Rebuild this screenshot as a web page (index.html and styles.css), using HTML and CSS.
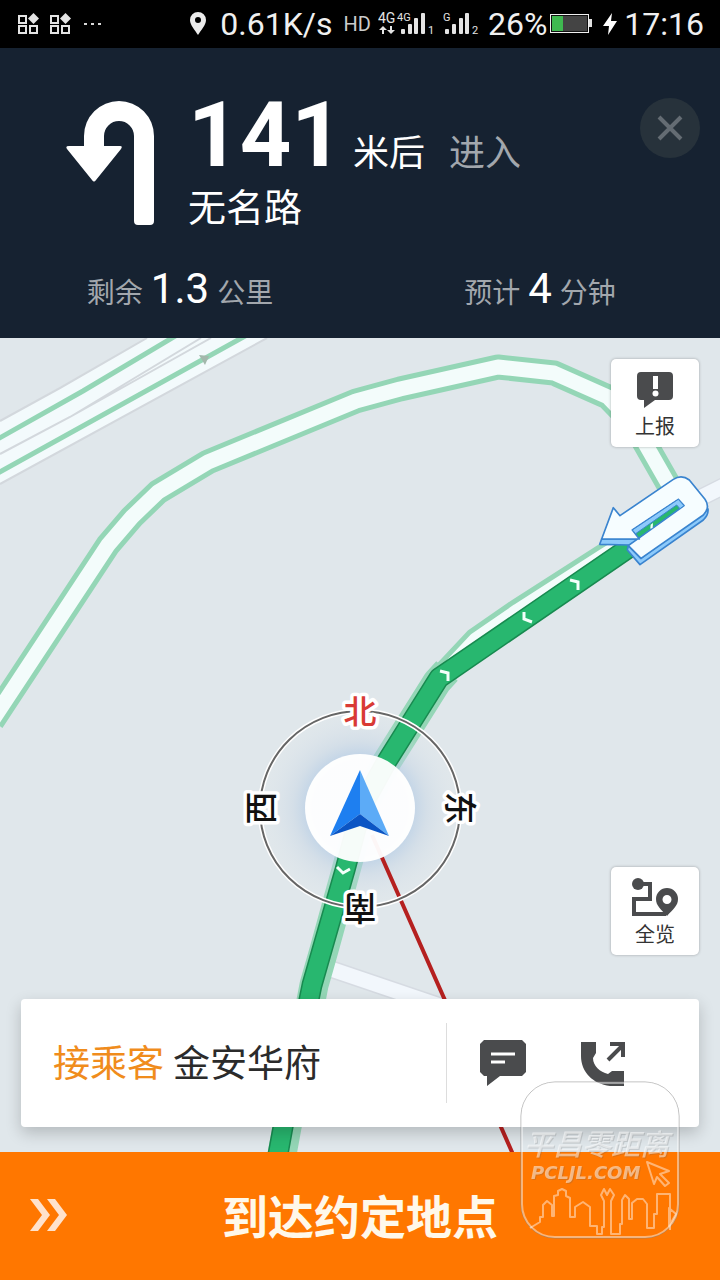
FILE: index.html
```html
<!DOCTYPE html>
<html lang="zh-CN">
<head>
    <meta charset="UTF-8">
    <meta name="viewport" content="width=device-width, initial-scale=1.0">
    <title>导航</title>
    <link rel="stylesheet" href="styles.css">
</head>
<body>
    <div class="status-bar">
        <div class="status-left">
            <svg class="app-icon" width="21" height="22" viewBox="0 0 21 22" aria-hidden="true">
                <path d="M1 3h7v7H1zM1 13h7v7H1zM12 13h7v7h-7z" fill="none" stroke="#e4e4e4" stroke-width="2"/>
                <path d="M15.500 0l5.500 5.500-5.500 5.500-5.500-5.500z" fill="#e4e4e4"/>
            </svg>
            <svg class="app-icon" width="21" height="22" viewBox="0 0 21 22" aria-hidden="true">
                <path d="M1 3h7v7H1zM1 13h7v7H1zM12 13h7v7h-7z" fill="none" stroke="#e4e4e4" stroke-width="2"/>
                <path d="M15.500 0l5.500 5.500-5.500 5.500-5.500-5.500z" fill="#e4e4e4"/>
            </svg>
            <svg width="20" height="4" viewBox="0 0 20 4" fill="#d8d8d8" aria-hidden="true">
                <rect x="2" y="1" width="3" height="2"/><rect x="9" y="1" width="3" height="2"/><rect x="16" y="1" width="3" height="2"/>
            </svg>
        </div>
        <div class="status-right">
            <svg class="pin-icon" width="16" height="24" viewBox="0 0 16 24" aria-hidden="true">
                <path d="M8 0a8 8 0 0 0-8 8c0 5 5 10 8 15 3-5 8-10 8-15a8 8 0 0 0-8-8zm0 5a3 3 0 1 1 0 6 3 3 0 0 1 0-6z" fill="#ececec"/>
            </svg>
            <span class="status-text">0.61K/s</span>
            <span class="status-hd">HD</span>
            <svg width="58" height="26" viewBox="0 0 58 26" fill="#e4e4e4" aria-hidden="true">
                <text class="signal-net" x="0" y="12">4G</text>
                <text class="signal-net small" x="19" y="10">4G</text>
                <path d="M5 15l4 4H6v4H4v-4H1zM13 23l-4-4h3v-4h2v4h3z"/>
                <rect x="23" y="18" width="4" height="5" rx="1"/><rect x="30" y="13" width="4" height="10" rx="1"/>
                <rect x="36" y="7" width="4" height="16" rx="1"/><rect x="43" y="2" width="4" height="21" rx="1"/>
                <text class="signal-net small" x="50" y="23">1</text>
            </svg>
            <svg width="38" height="26" viewBox="0 0 38 26" fill="#e4e4e4" aria-hidden="true">
                <text class="signal-net small" x="0" y="10">G</text>
                <rect x="2" y="18" width="4" height="5" rx="1"/><rect x="9" y="13" width="4" height="10" rx="1"/>
                <rect x="16" y="7" width="4" height="16" rx="1"/><rect x="22" y="2" width="4" height="21" rx="1"/>
                <text class="signal-net small" x="29" y="23">2</text>
            </svg>
            <span class="status-text battery-text">26%</span>
            <svg class="battery-icon" width="42" height="20" viewBox="0 0 42 20" aria-hidden="true">
                <rect x="0.500" y="0.500" width="38" height="18" fill="#111" stroke="#f0f0f0"/>
                <rect x="2" y="2" width="35" height="15" fill="#444"/>
                <rect x="2" y="2" width="11" height="15" fill="#3fb950"/>
                <rect x="39" y="5" width="3" height="8" fill="#e0e0e0"/>
            </svg>
            <svg width="14" height="22" viewBox="0 0 14 22" aria-hidden="true">
                <path d="M9 0L0 13h6l-1 9 9-14H8z" fill="#fff"/>
            </svg>
            <span class="status-text">17:16</span>
        </div>
    </div>

    <header class="guide">
        <div class="guide-main">
            <svg class="turn-icon" width="90" height="126" viewBox="0 0 90 126" aria-hidden="true">
                <path d="M18 41V36a35 35 0 0 1 70 0v85q0 4-4 4H72q-4 0-4-4V36a15 15 0 0 0-30 0v10h16q3 0 1 3L30 80q-2 3-4 0L1 49q-2-3 2-3h15z" fill="#fff"/>
            </svg>
            <div class="guide-text">
                <div class="guide-distance">
                    <strong>141</strong>
                    <span class="unit">米后</span>
                    <span class="action">进入</span>
                </div>
                <div class="guide-road">无名路</div>
            </div>
            <button class="close-btn" type="button" aria-label="关闭">
                <svg width="26" height="26" viewBox="0 0 26 26" aria-hidden="true">
                    <path d="M2 2l22 22M24 2L2 24" stroke="#646c73" stroke-width="4"/>
                </svg>
            </button>
        </div>
        <div class="guide-stats">
            <div class="stat"><span>剩余</span><b>1.3</b><span>公里</span></div>
            <div class="stat"><span>预计</span><b>4</b><span>分钟</span></div>
        </div>
    </header>

    <main class="map">
        <svg class="map-canvas" viewBox="0 338 720 814" preserveAspectRatio="xMidYMid slice" aria-hidden="true">
            <defs>
                <radialGradient id="glow">
                    <stop offset="0.5" stop-color="#a6c4e4" stop-opacity="0.65"/>
                    <stop offset="0.7" stop-color="#c3d3e4" stop-opacity="0.4"/>
                    <stop offset="1" stop-color="#d8e1ea" stop-opacity="0"/>
                </radialGradient>
            </defs>

            <!-- highway -->
            <path d="M0 421L147 338H267L0 484z" fill="#f3fafc"/>
            <g fill="none" stroke="#d3d8dd" stroke-width="2">
                <path d="M0 421L60 388L147 338M0 484L267 338M0 454L70 417L201 338M70 417L211 338"/>
            </g>
            <path d="M-4 440L83 391L177 335M-4 474L247 335" fill="none" stroke="#94d6b6" stroke-width="5"/>
            <path d="M199 355l10 1-4 9z" fill="#a3b8ac"/>

            <!-- minor roads -->
            <g fill="none" stroke-linejoin="round">
                <path d="M690 503L726 485M322 966L440 1006" stroke="#d6dbe2" stroke-width="18"/>
                <path d="M690 503L726 485M322 966L440 1006" stroke="#f2f7fc" stroke-width="15"/>
                <path d="M-8 721L108 545L132 517L158 492L208 462L356 401L400 389L498 367L554 373L608 397L634 424L682 508L604 556L518 611L476 640L446 672" stroke="#94d6b6" stroke-width="25"/>
                <path d="M447 671L437 682L386 763L364 805L346 870L324 950L314 985L287 1127L281 1160" stroke="#94d6b6" stroke-width="29"/>
                <path d="M-8 721L108 545L132 517L158 492L208 462L356 401L400 389L498 367L554 373L608 397L634 424L682 508L604 556L518 611L476 640L446 672" stroke="#f3fcfb" stroke-width="15"/>
            </g>

            <circle cx="360" cy="808" r="96" fill="url(#glow)"/>

            <!-- route -->
            <g fill="none" stroke-linejoin="round">
                <path d="M684 510L439 678L387 761L362 806L345 870L322 950L312 985L283 1127L277 1160" stroke="#188a50" stroke-width="21"/>
                <path d="M684 510L439 678L387 761L362 806L345 870L322 950L312 985L283 1127L277 1160" stroke="#28b76f" stroke-width="18"/>
            </g>
            <g fill="none" stroke="#f3fffa" stroke-width="3">
                <path d="M570 580l8 2v8M524 612v7l8 3M440 671l8 2v8M337 867l6 6 7-4"/>
            </g>
            <path d="M372 835L512 1152L518 1166" fill="none" stroke="#b5201f" stroke-width="4"/>

            <!-- turn marker -->
            <g transform="translate(590 460) scale(0.3333)" stroke="#3a84cf" stroke-width="5" stroke-linejoin="round">
                <path d="M35 237H148L118 255L29 253zM115 257L153 295L354 147Q356 164 340 180L150 314L112 270z" fill="#8ccafb"/>
                <path d="M35 237L70 143L90 167L250 58Q275 42 298 60L345 118Q362 142 340 165L153 295L115 257L282 137L265 118L127 210L148 237z" fill="#f6fdff"/>
                <path d="M127 210L265 118L282 137L270 146L260 135L137 221z" fill="#8ccafb" stroke-width="3"/>
                <path d="M182 194l7-5-1 15-7 2z" fill="#f3fffa" stroke="none"/>
            </g>

            <!-- compass -->
            <ellipse cx="360" cy="809" rx="100" ry="98" fill="none" stroke="#fff" stroke-width="5"/>
            <ellipse cx="360" cy="809" rx="100" ry="98" fill="none" stroke="#666" stroke-width="2"/>
            <ellipse cx="360" cy="808" rx="55" ry="54" fill="#fff" fill-opacity="0.96"/>
            <path d="M360 770L330 836L360 814z" fill="#1e7ff0"/>
            <path d="M360 770L389 836L360 814z" fill="#5cabf7"/>
            <path d="M330 836L360 814L389 836L360 826z" fill="#0b55c4"/>
            <g class="compass-text">
                <text class="north" x="360" y="724">北</text>
                <text x="460" y="820" transform="rotate(90 460 808)">东</text>
                <text x="360" y="920" transform="rotate(180 360 908)">南</text>
                <text x="261" y="820" transform="rotate(-90 261 808)">西</text>
            </g>
        </svg>

        <button class="map-btn" type="button">
            <svg width="36" height="36" viewBox="0 0 36 36" aria-hidden="true">
                <path d="M4 0h28q4 0 4 4v20q0 4-4 4H18L7 36v-8H4q-4 0-4-4V4q0-4 4-4z" fill="#4a4b4d"/>
                <path d="M16 4h5v13h-5z" fill="#fff"/><circle cx="18.500" cy="21.500" r="3" fill="#fff"/>
            </svg>
            <span>上报</span>
        </button>
        <button class="map-btn overview" type="button">
            <svg width="46" height="38" viewBox="0 0 46 38" aria-hidden="true">
                <circle cx="6" cy="6" r="6" fill="#4a4b4d"/>
                <path d="M6 6h12v15H2v15h32" fill="none" stroke="#4a4b4d" stroke-width="4"/>
                <path d="M35 10a11 11 0 0 0-11 11c0 7 5 10 11 17 6-7 11-10 11-17a11 11 0 0 0-11-11zm0 7a4 4 0 1 1 0 9 4 4 0 0 1 0-9z" fill="#4a4b4d"/>
            </svg>
            <span>全览</span>
        </button>

        <section class="trip-card">
            <div class="trip-info"><span class="trip-tag">接乘客</span><span>金安华府</span></div>
            <div class="trip-actions">
                <button type="button" aria-label="发消息">
                    <svg width="46" height="46" viewBox="0 0 46 46" aria-hidden="true">
                        <path d="M4 0h38l4 4v28l-4 4H20L7 46V36H4l-4-4V4z" fill="#4a4b4d"/>
                        <path d="M11 14h24M11 22h14" stroke="#fff" stroke-width="3"/>
                    </svg>
                </button>
                <button type="button" aria-label="打电话">
                    <svg width="46" height="46" viewBox="0 0 46 46" aria-hidden="true">
                        <path d="M1 2h15v11l-3 5c0 8 7 14 15 16l4-3h12v15H30C13 44 1 32 1 16z" fill="#4a4b4d"/>
                        <path d="M28 20L43 5M30 4h13v13" fill="none" stroke="#4a4b4d" stroke-width="4"/>
                    </svg>
                </button>
            </div>
        </section>
    </main>

    <button class="arrive-btn" type="button">
        <svg class="arrive-arrow" width="38" height="32" viewBox="0 0 38 32" aria-hidden="true">
            <path d="M0 0h8l12 16L8 32H0l12-16zM17 0h8l12 16-12 16h-8l12-16z" fill="#ffe2cc"/>
        </svg>
        到达约定地点
    </button>

    <div class="watermark">
        <svg width="160" height="160" viewBox="0 0 160 160" aria-hidden="true">
            <rect x="1" y="2" width="158" height="156" rx="34" fill="none" stroke="#808080" stroke-opacity="0.6"/>
            <g fill="none" stroke="#fff" stroke-opacity="0.45" stroke-width="2" stroke-linejoin="round">
                <rect x="2" y="3" width="156" height="154" rx="33"/>
                <path d="M10 148l10-6v-5h3v-12l4-4 5 4v11h2v-20l4-1v-4l4-2 4 2v5l4 2v19h5v-10l8-5 7 5v19h7v8h5v-7h2v-26l-3-6 3-6 3 6 3-6 4 6-3 6v33h9v-10h2v-24l3-5 4 4v20h3v-16l5-4h6l4 5v24h7v-14h3v-20h13v36M149 128v18l7-12z"/>
                <path d="M127 82l22 9-9 3 9 9-4 3-8-9-3 7z"/>
            </g>
            <g class="watermark-text">
                <text class="watermark-name" x="4" y="75">平昌零距离</text>
                <text class="watermark-site" x="11" y="99">PCLJL.COM</text>
            </g>
        </svg>
    </div>
</body>
</html>
```
FILE: styles.css
```css
* {
    margin: 0;
    padding: 0;
    box-sizing: border-box;
}

body {
    position: relative;
    min-height: 100vh;
    display: flex;
    flex-direction: column;
    font-family: Roboto, 'Noto Sans CJK SC', sans-serif;
    background-color: #e0e7eb;
}

button {
    border: none;
    background: none;
    font-family: inherit;
    cursor: pointer;
}

svg {
    display: block;
    flex-shrink: 0;
}

/* Status bar */
.status-bar {
    height: 48px;
    padding: 0 16px 0 18px;
    display: flex;
    justify-content: space-between;
    align-items: center;
    background-color: #000;
    color: #f0f0f0;
}

.status-left {
    display: flex;
    align-items: center;
    gap: 11px;
}

.status-right {
    display: flex;
    align-items: center;
    gap: 7px;
}

.pin-icon {
    margin-right: 7px;
}

.status-text {
    font-size: 32px;
    line-height: 50px;
}

.battery-text {
    margin-right: -4px;
}

.battery-icon {
    margin-right: 4px;
}

.status-hd {
    font-size: 20px;
    font-weight: 400;
    margin-left: 4px;
    color: #ccc;
}

.signal-net {
    font-size: 14px;
}

.signal-net.small {
    font-size: 11px;
}

/* Guidance header */
.guide {
    min-height: 290px;
    background-color: #162231;
    color: #fff;
}

.guide-main {
    display: flex;
    padding: 40px 20px 0 66px;
}

.turn-icon {
    margin-top: 12px;
}

.guide-text {
    flex: 1;
    padding-left: 32px;
}

.guide-distance {
    display: flex;
    align-items: baseline;
}

.guide-distance strong {
    font-size: 90px;
    font-weight: 700;
    line-height: 96px;
}

.guide-distance .unit,
.guide-distance .action {
    font-size: 36px;
    line-height: 36px;
}

.guide-distance .unit {
    margin-left: 10px;
}

.guide-distance .action {
    margin-left: 24px;
    color: #a2a7ad;
}

.guide-road {
    font-size: 38px;
    line-height: 48px;
}

.close-btn {
    width: 60px;
    height: 60px;
    margin-top: 10px;
    border-radius: 50%;
    background-color: #27323b;
    display: flex;
    align-items: center;
    justify-content: center;
}

.guide-stats {
    display: grid;
    grid-template-columns: 1fr 1fr;
    margin-top: 29px;
}

.stat {
    display: flex;
    justify-content: center;
    align-items: baseline;
    gap: 8px;
    font-size: 28px;
    line-height: 56px;
    color: #a2a7ad;
}

.stat b {
    font-size: 42px;
    font-weight: 400;
    color: #fff;
}

/* Map */
.map {
    position: relative;
    flex: 1;
    min-height: 640px;
    display: flex;
    flex-direction: column;
    padding: 21px 21px 25px;
    overflow: hidden;
}

.map-canvas {
    position: absolute;
    top: 0;
    left: 0;
    width: 100%;
    height: 100%;
}

.compass-text {
    font-size: 33px;
    font-weight: 500;
    text-anchor: middle;
    fill: #111;
    stroke: #fff;
    stroke-width: 7px;
    stroke-linejoin: round;
    paint-order: stroke;
}

.compass-text .north {
    fill: #d93a35;
}

.map-btn {
    position: relative;
    align-self: flex-end;
    width: 88px;
    height: 88px;
    display: flex;
    flex-direction: column;
    align-items: center;
    justify-content: flex-end;
    padding-bottom: 5px;
    gap: 4px;
    border-radius: 5px;
    background-color: #fff;
    box-shadow: 0 0 3px rgba(0, 0, 0, 0.3);
    font-size: 20px;
    line-height: 30px;
    color: #333;
}

.map-btn.overview {
    margin-top: auto;
    margin-bottom: 44px;
}

.trip-card {
    position: relative;
    height: 128px;
    display: flex;
    align-items: center;
    border-radius: 4px;
    background-color: #fff;
    box-shadow: 0 6px 16px rgba(0, 0, 0, 0.2);
}

.trip-info {
    flex: 1;
    display: flex;
    gap: 9px;
    padding-top: 4px;
    padding-left: 32px;
    font-size: 37px;
    line-height: 56px;
    color: #2b2b2b;
}

.trip-tag {
    color: #f08c1c;
}

.trip-actions {
    height: 80px;
    display: flex;
    align-items: center;
    gap: 54px;
    padding: 0 73px 0 33px;
    border-left: 1px solid #ddd;
}

/* Arrive button */
.arrive-btn {
    position: relative;
    height: 128px;
    padding-top: 4px;
    background-color: #ff7700;
    color: #fff8ea;
    font-size: 46px;
    font-weight: 700;
    line-height: 64px;
}

.arrive-arrow {
    position: absolute;
    left: 30px;
    top: 47px;
}

/* Watermark */
.watermark {
    position: absolute;
    right: 40px;
    bottom: 40px;
    pointer-events: none;
}

.watermark-text {
    fill: rgba(255, 255, 255, 0.5);
    font-style: italic;
    filter: drop-shadow(1px 1px 0 rgba(90, 90, 90, 0.4));
}

.watermark-name {
    font-size: 29px;
    font-weight: 500;
}

.watermark-site {
    font-family: 'DejaVu Sans', sans-serif;
    font-size: 18px;
    font-weight: 700;
}
```
